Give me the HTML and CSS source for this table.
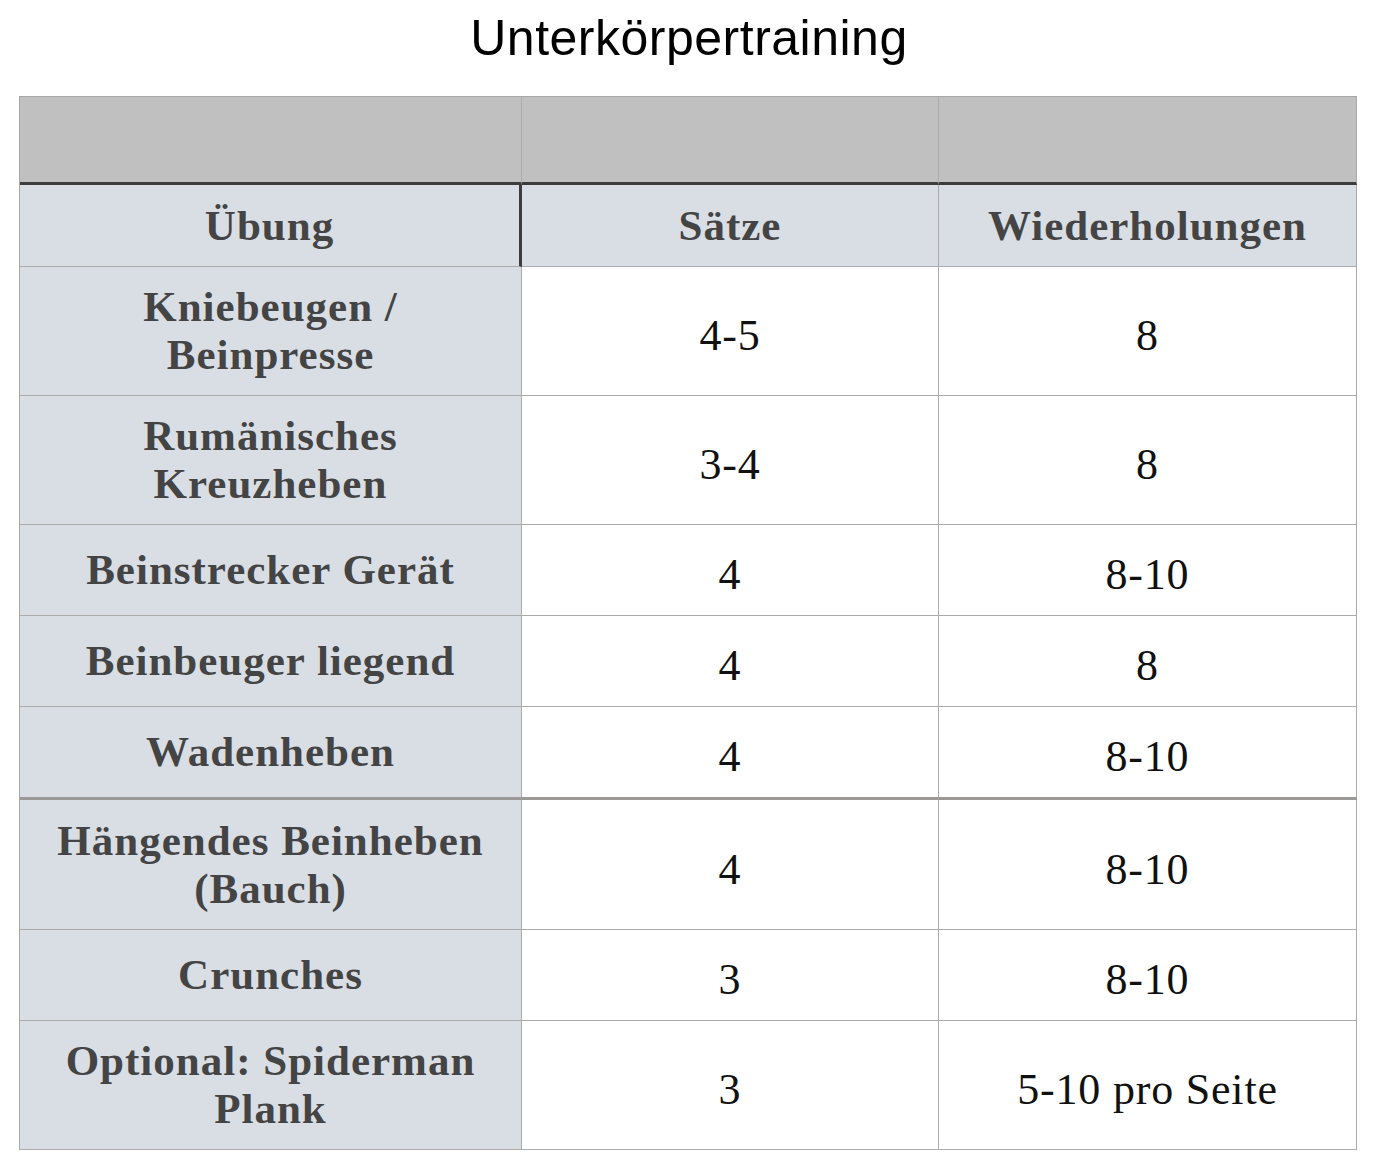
FILE: index.html
```html
<!DOCTYPE html>
<html lang="de">
<head>
<meta charset="utf-8">
<title>Unterkörpertraining</title>
<link rel="stylesheet" href="styles.css">
</head>
<body>
<h1 class="title">Unterkörpertraining</h1>
<table class="workout">
  <colgroup>
    <col class="col-name">
    <col class="col-sets">
    <col class="col-reps">
  </colgroup>
  <thead>
    <tr class="row-band">
      <th></th><th></th><th></th>
    </tr>
    <tr class="row-head">
      <th class="head-first">Übung</th>
      <th>Sätze</th>
      <th>Wiederholungen</th>
    </tr>
  </thead>
  <tbody>
    <tr class="row-tall">
      <th class="name">Kniebeugen /<br>Beinpresse</th>
      <td class="val">4-5</td>
      <td class="val">8</td>
    </tr>
    <tr class="row-tall">
      <th class="name">Rumänisches<br>Kreuzheben</th>
      <td class="val">3-4</td>
      <td class="val">8</td>
    </tr>
    <tr class="row-short">
      <th class="name">Beinstrecker Gerät</th>
      <td class="val">4</td>
      <td class="val">8-10</td>
    </tr>
    <tr class="row-short">
      <th class="name">Beinbeuger liegend</th>
      <td class="val">4</td>
      <td class="val">8</td>
    </tr>
    <tr class="row-short row-split">
      <th class="name">Wadenheben</th>
      <td class="val">4</td>
      <td class="val">8-10</td>
    </tr>
    <tr class="row-tall row-after">
      <th class="name">Hängendes Beinheben<br>(Bauch)</th>
      <td class="val">4</td>
      <td class="val">8-10</td>
    </tr>
    <tr class="row-short">
      <th class="name">Crunches</th>
      <td class="val">3</td>
      <td class="val">8-10</td>
    </tr>
    <tr class="row-tall">
      <th class="name">Optional: Spiderman<br>Plank</th>
      <td class="val">3</td>
      <td class="val">5-10 pro Seite</td>
    </tr>
  </tbody>
</table>
</body>
</html>
```

FILE: styles.css
```css
html, body {
  margin: 0;
  padding: 0;
  background: #ffffff;
}

body {
  width: 1378px;
}

.title {
  margin: 0;
  padding-top: 8px;
  font-family: "Liberation Sans", Arial, sans-serif;
  font-weight: normal;
  font-size: 50px;
  line-height: 60px;
  letter-spacing: 0.5px;
  text-align: center;
  color: #000000;
}

.workout {
  margin: 28px 0 0 19px;
  width: 1338px;
  table-layout: fixed;
  border-collapse: separate;
  border-spacing: 0;
  border-top: 1px solid #a8a8a8;
  border-left: 1px solid #a8a8a8;
}

.col-name { width: 502px; }
.col-sets { width: 417px; }
.col-reps { width: 418px; }

.workout th,
.workout td {
  box-sizing: border-box;
  padding: 0;
  text-align: center;
  vertical-align: middle;
  border-right: 1px solid #ababab;
  border-bottom: 1px solid #ababab;
}

.row-band th {
  height: 88px;
  background: #bfc0bf;
  border-bottom: 3px solid #3d3d3d;
}

.row-head th {
  height: 82px;
  background: #d9dee5;
  font-family: "Liberation Serif", "Times New Roman", serif;
  font-weight: bold;
  font-size: 43px;
  letter-spacing: 1px;
  line-height: 48px;
  color: #444444;
}

.row-head .head-first {
  border-right: 3px solid #3d3d3d;
}

.name {
  background: #d9dee5;
  font-family: "Liberation Serif", "Times New Roman", serif;
  font-weight: bold;
  font-size: 43px;
  letter-spacing: 1px;
  line-height: 48px;
  color: #444444;
}

.val {
  background: #ffffff;
  padding-top: 10px !important;
  font-family: "Liberation Serif", "Times New Roman", serif;
  font-weight: normal;
  font-size: 44px;
  letter-spacing: 0.8px;
  line-height: 48px;
  color: #111111;
}

.row-tall th,
.row-tall td {
  height: 129px;
}

.row-short th,
.row-short td {
  height: 91px;
}

.row-split th,
.row-split td {
  height: 93px;
  border-bottom: 3px solid #9a9997;
}

.row-after th,
.row-after td {
  height: 130px;
}
```
